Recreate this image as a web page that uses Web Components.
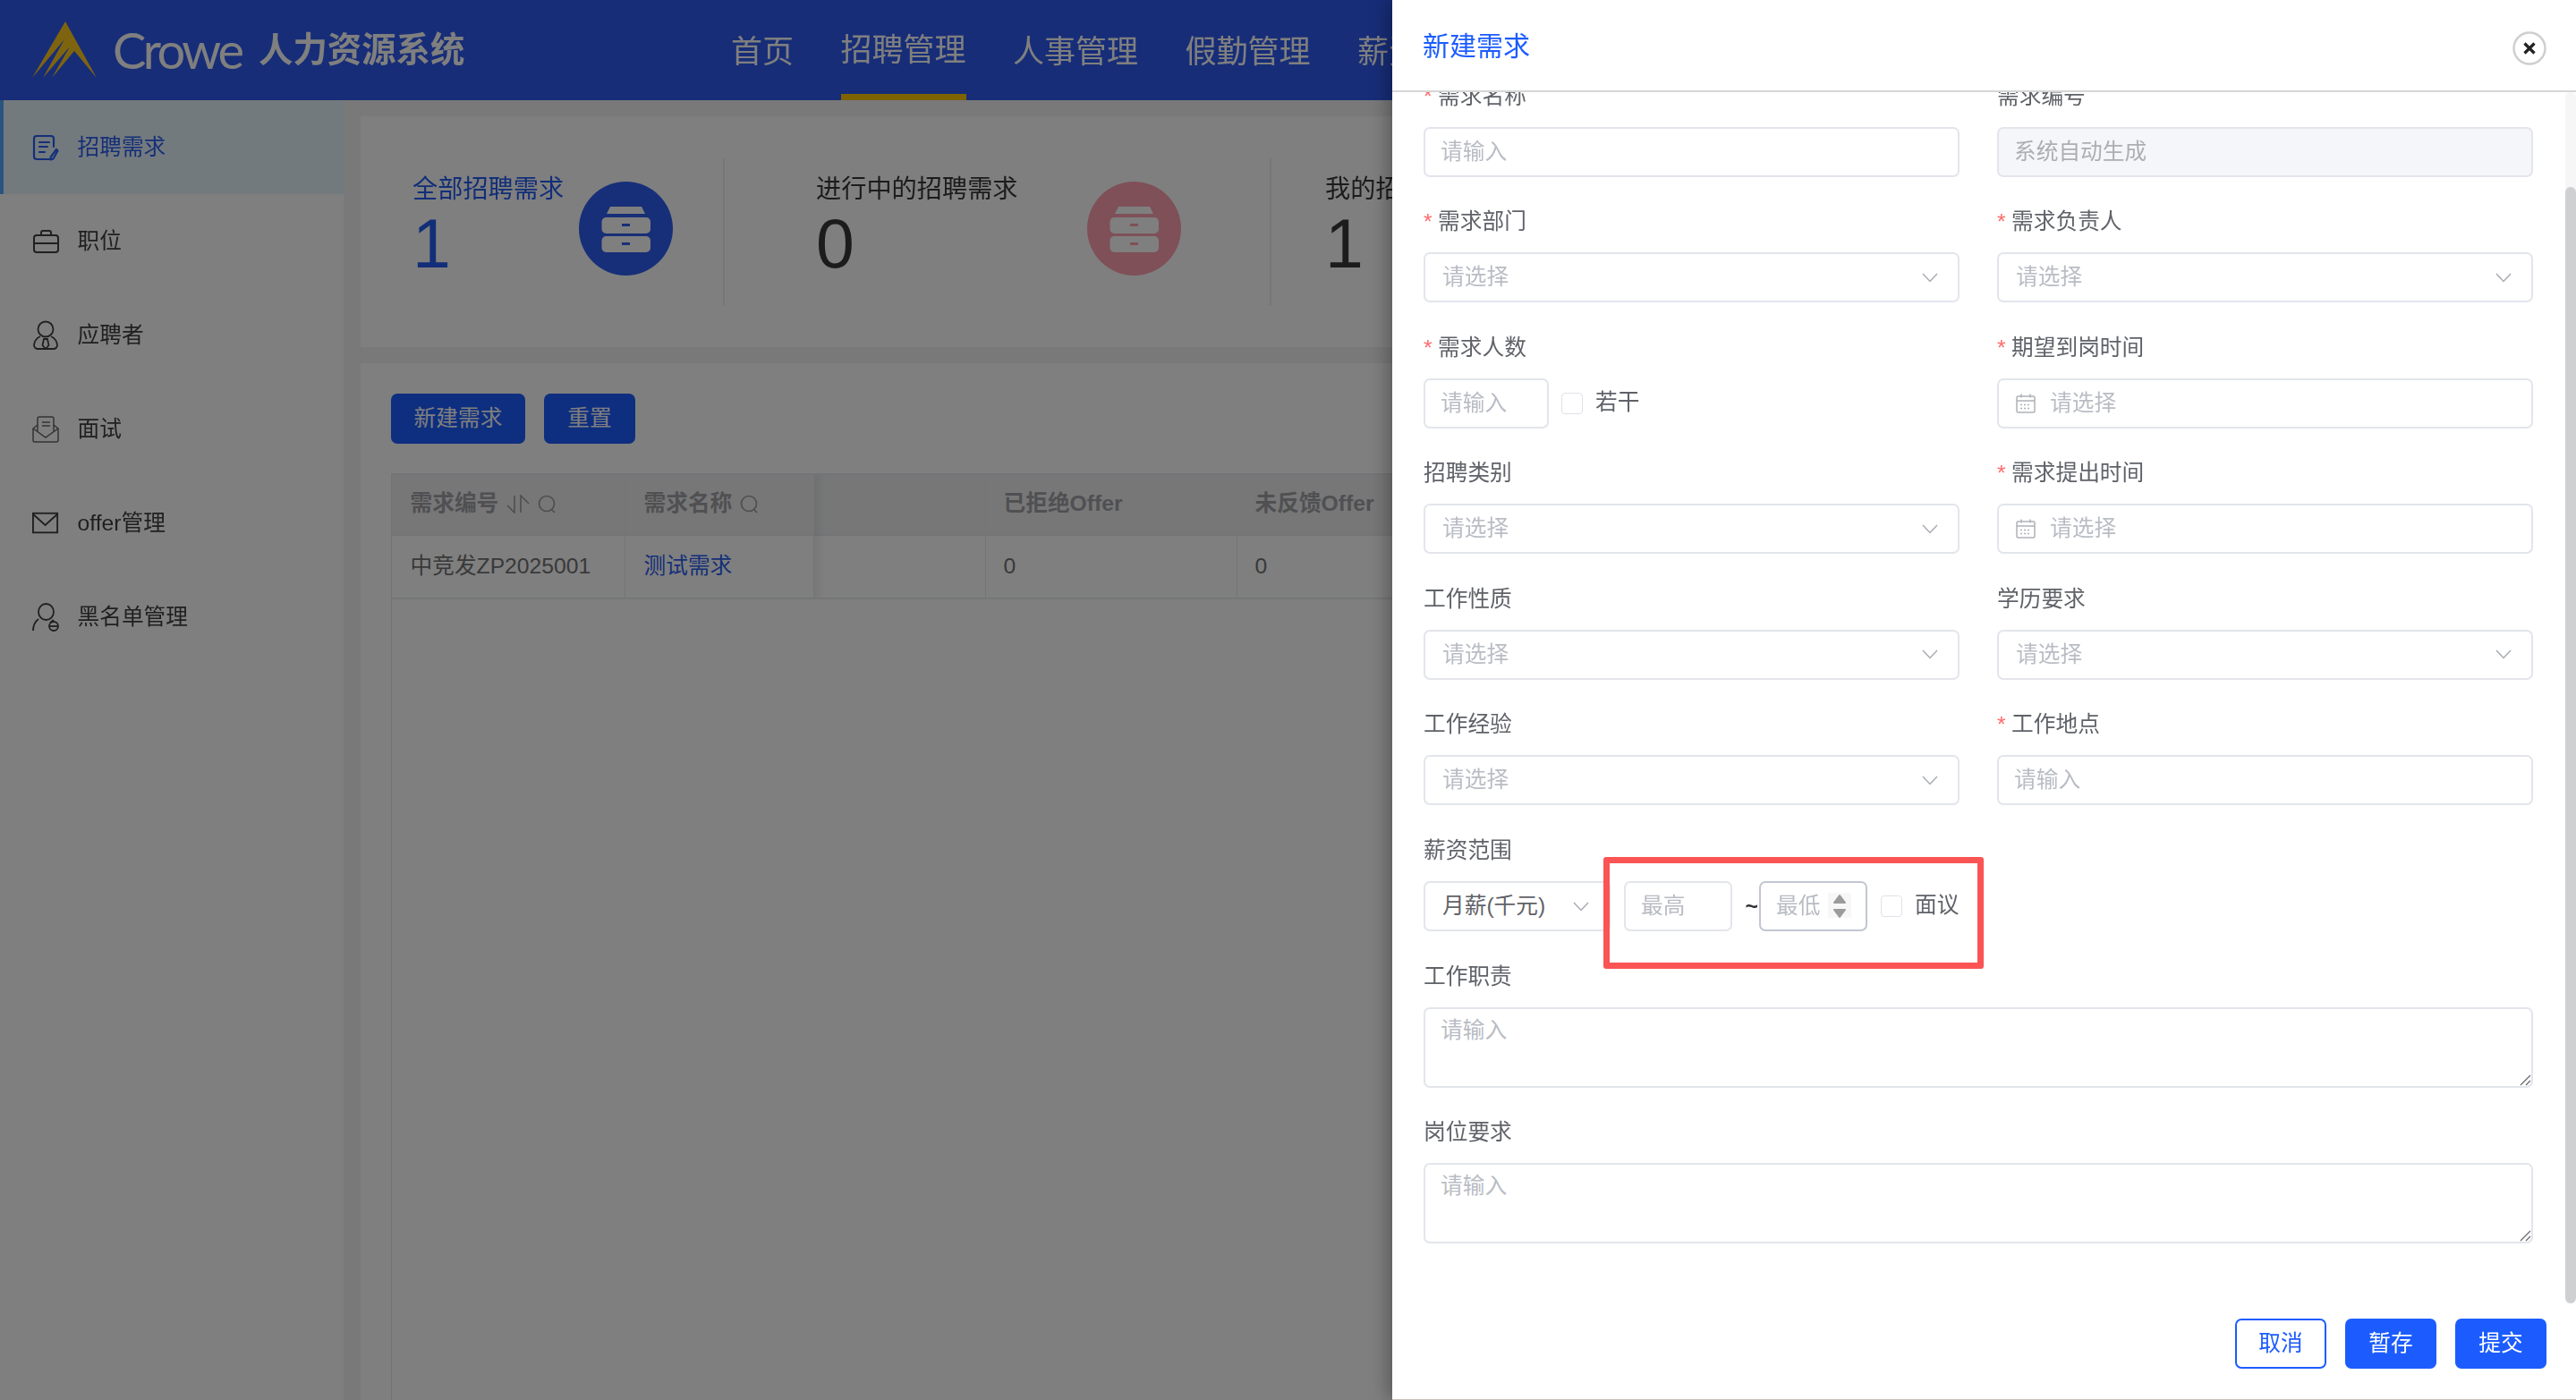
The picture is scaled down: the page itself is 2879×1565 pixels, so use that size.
<!DOCTYPE html>
<html lang="zh">
<head>
<meta charset="utf-8">
<title>Crowe 人力资源系统</title>
<style>
  html, body { margin: 0; height: 100%; overflow: hidden; }
  body { font-family: "Liberation Sans", "Noto Sans CJK SC", sans-serif; font-size: 24.7px; }
</style>
</head>
<body>
<hr-app>
  <hr-header slot="header"></hr-header>

  <side-menu slot="side">
    <side-item label="招聘需求" active>
      <svg slot="icon" viewBox="0 0 30 30" width="30" height="30" fill="none" stroke="currentColor" stroke-width="2.2" stroke-linecap="round" stroke-linejoin="round"><path d="M19 28H5a3 3 0 0 1-3-3V5a3 3 0 0 1 3-3h16a3 3 0 0 1 3 3v9"/><path d="M8 9h11M8 14h9M8 20h6"/><path d="M27 17l1.5 1.5-5 9-3 1 .2-3z"/></svg>
    </side-item>
    <side-item label="职位">
      <svg slot="icon" viewBox="0 0 30 30" width="30" height="30" fill="none" stroke="currentColor" stroke-width="2"><rect x="2" y="8" width="27" height="19" rx="3"/><path d="M10 8V5a2 2 0 0 1 2-2h7a2 2 0 0 1 2 2v3M2 17h27"/></svg>
    </side-item>
    <side-item label="应聘者">
      <svg slot="icon" viewBox="0 0 30 34" width="30" height="34" fill="none" stroke="currentColor" stroke-width="1.8"><circle cx="15" cy="10" r="8.5"/><path d="M9 18C4 20 2 25 2 28c0 2 2 4 4 4h18c2 0 4-2 4-4 0-3-2-8-7-10"/><path d="M13 21h4l1.5 7-3.5 4-3.5-4z"/></svg>
    </side-item>
    <side-item label="面试">
      <svg slot="icon" viewBox="0 0 30 32" width="30" height="32" fill="none" stroke="currentColor" stroke-width="1.5" opacity=".8"><path d="M6 11l-5 4v13a2 2 0 0 0 2 2h24a2 2 0 0 0 2-2V15l-5-4"/><path d="M1 15l14 10 14-10"/><path d="M6 18V4a2 2 0 0 1 2-2h14a2 2 0 0 1 2 2v14"/><path d="M11 8h9M11 12h9"/></svg>
    </side-item>
    <side-item label="offer管理">
      <svg slot="icon" viewBox="0 0 32 26" width="32" height="26" fill="none" stroke="currentColor" stroke-width="2"><rect x="1" y="1" width="29" height="23"/><path d="M1 2l14.500 13L30 2"/></svg>
    </side-item>
    <side-item label="黑名单管理">
      <svg slot="icon" viewBox="0 0 30 32" width="30" height="32" fill="none" stroke="currentColor" stroke-width="1.8"><ellipse cx="15.500" cy="10" rx="8.500" ry="9"/><path d="M1 31c0-6 2-10 6-13M24 19l-4 3"/><circle cx="24" cy="26" r="5"/><path d="M20 26h8"/></svg>
    </side-item>
  </side-menu>

  <main-view slot="main">
    <stat-bar>
      <stat-card label="全部招聘需求" value="1" accent style="width:407px;--pad:58px"></stat-card>
      <stat-card label="进行中的招聘需求" value="0" pink style="width:611px;--pad:102px"></stat-card>
      <stat-card label="我的招聘需求" value="1" style="width:500px;--pad:60px"></stat-card>
    </stat-bar>
    <demand-list></demand-list>
  </main-view>

  <req-drawer slot="drawer" heading="新建需求">
    <form-field label="需求名称" required><text-box placeholder="请输入"></text-box></form-field>
    <form-field label="需求编号"><text-box placeholder="系统自动生成" disabled></text-box></form-field>
    <form-field label="需求部门" required><select-box placeholder="请选择"></select-box></form-field>
    <form-field label="需求负责人" required><select-box placeholder="请选择"></select-box></form-field>
    <form-field label="需求人数" required><count-box></count-box></form-field>
    <form-field label="期望到岗时间" required><date-box placeholder="请选择"></date-box></form-field>
    <form-field label="招聘类别"><select-box placeholder="请选择"></select-box></form-field>
    <form-field label="需求提出时间" required><date-box placeholder="请选择"></date-box></form-field>
    <form-field label="工作性质"><select-box placeholder="请选择"></select-box></form-field>
    <form-field label="学历要求"><select-box placeholder="请选择"></select-box></form-field>
    <form-field label="工作经验"><select-box placeholder="请选择"></select-box></form-field>
    <form-field label="工作地点" required><text-box placeholder="请输入"></text-box></form-field>
    <form-field label="薪资范围" style="grid-column:1/-1"><salary-range></salary-range></form-field>
    <form-field label="工作职责" style="grid-column:1/-1"><area-box placeholder="请输入"></area-box></form-field>
    <form-field label="岗位要求" style="grid-column:1/-1"><area-box placeholder="请输入"></area-box></form-field>
    <app-button slot="footer" outline>取消</app-button>
    <app-button slot="footer">暂存</app-button>
    <app-button slot="footer">提交</app-button>
  </req-drawer>
</hr-app>

<script>
const PRIMARY = '#1c5cff';
const CHEVRON = `<svg viewBox="0 0 18 11" width="18" height="11" fill="none" stroke="#a9acb3" stroke-width="1.500"><path d="M1 1l8 8.500L17 1"/></svg>`;
const BOX = `box-sizing:border-box;height:56px;border:2px solid #e3e5ec;border-radius:7px;background:#fff;line-height:52px;`;

// every element here only has static markup, so one small helper is enough
function component(name, render) {
    customElements.define(name, class extends HTMLElement {
        constructor() {
            super();
            this._shadow = this.attachShadow({ mode: 'open' });
        }
        connectedCallback() {
            this._shadow.innerHTML = render(this);
        }
    });
}
const attr = (el, n) => el.getAttribute(n) || '';

component('hr-app', () => `
  <style>
    /* the reference is an upscaled capture, edges are a bit soft */
    :host { display: block; position: relative; width: 2879px; height: 1565px; overflow: hidden; filter: blur(.5px); }
    .body { display: flex; height: 1453px; }
    .mask { position: absolute; inset: 0; background: rgba(0,0,0,.5); }
  </style>
  <slot name="header"></slot>
  <div class="body"><slot name="side"></slot><slot name="main"></slot></div>
  <div class="mask"></div>
  <slot name="drawer"></slot>
`);

component('hr-header', () => `
  <style>
    :host { display: flex; height: 112px; background: #2e5af0; color: #fff; }
    .logo { display: flex; align-items: center; width: 817px; flex: none; box-sizing: border-box; padding-left: 36px; }
    .crowe { font-family: Lato, "Open Sans", sans-serif; font-weight: 400; font-size: 56px; letter-spacing: -3.500px; width: 163px; margin-left: 17px; line-height: 112px; }
    .name { font-weight: 700; font-size: 38.400px; line-height: 112px; white-space: nowrap; }
    nav { display: flex; gap: 52.500px; font-size: 35px; }
    nav span { display: flex; align-items: center; box-sizing: border-box; height: 112px; padding-bottom: 3px; white-space: nowrap; }
    nav .on { padding-bottom: 0; border-bottom: 7px solid #ffc600; }
  </style>
  <div class="logo">
    <svg width="73" height="64" viewBox="36 24 73 64"><polygon fill="#ffc820" points="73,24 108,87 83,57 58,87 78,52 48,87 72,44 36,87"/></svg>
    <span class="crowe">Crowe</span><span class="name">人力资源系统</span>
  </div>
  <nav><span>首页</span><span class="on">招聘管理</span><span>人事管理</span><span>假勤管理</span><span>薪资</span></nav>
`);

component('side-menu', () => `
  <style>:host { display: block; width: 384px; flex: none; background: #fff; }</style>
  <slot></slot>
`);

component('side-item', el => `
  <style>
    :host { display: flex; align-items: center; box-sizing: border-box; height: 105px; padding-left: 32px; border-left: 4px solid transparent; color: #404040; line-height: 32px; }
    :host([active]) { border-left-color: #54a8ff; background: #e6f4fc; color: #2b5ff0; }
    .icon { display: flex; width: 30px; margin-right: 20.500px; justify-content: center; }
  </style>
  <span class="icon"><slot name="icon"></slot></span><span>${attr(el, 'label')}</span>
`);

component('main-view', () => `
  <style>:host { display: flex; flex-direction: column; flex: 1; gap: 18px; min-width: 0; padding: 18px 0 0 19px; background: #f2f2f2; }</style>
  <slot></slot>
`);

component('stat-bar', () => `
  <style>:host { display: flex; align-items: center; height: 258px; flex: none; background: #fff; }</style>
  <slot></slot>
`);

component('stat-card', el => {
    const tint = el.hasAttribute('pink') ? '#ffa0b0' : '#2e5ef0';
    return `
  <style>
    :host { display: flex; justify-content: space-between; box-sizing: border-box; height: 164px; padding: 0 calc(var(--pad) - 3px) 0 var(--pad); border-right: 2px solid #ececec; color: #383838; }
    :host([accent]) { color: #245cf0; padding-right: 56px; }
    :host(:last-child) { border-right: 0; }
    .label { font-size: 28.200px; line-height: 40px; margin-top: 14px; white-space: nowrap; }
    .value { font-size: 77px; line-height: 72px; margin-top: 5px; }
    svg { margin-top: 26px; flex: none; }
  </style>
  <div><div class="label">${attr(el, 'label')}</div><div class="value">${attr(el, 'value')}</div></div>
  <svg width="105" height="105" viewBox="0 0 105 105">
    <circle cx="52.500" cy="52.500" r="52.500" fill="${tint}"/>
    <path fill="#fff" d="M35 28h35l4 8H31z"/>
    <rect x="25.500" y="40" width="54.500" height="18" rx="5" fill="#fff"/>
    <rect x="25.500" y="61" width="54.500" height="18" rx="5" fill="#fff"/>
    <rect x="48" y="47" width="9" height="3" fill="${tint}"/>
    <rect x="48" y="68" width="9" height="3" fill="${tint}"/>
  </svg>`;
});

const SEARCH = `<svg width="21" height="21" viewBox="0 0 21 21" fill="none" stroke="#9c9c9c" stroke-width="1.700"><circle cx="10" cy="10" r="8.500"/><path d="M15 16l4 4"/></svg>`;
const SORT = `<svg width="26" height="21" viewBox="0 0 26 21" fill="none" stroke="#9c9c9c" stroke-width="1.600"><path d="M9 1v19L1 12M16 20V1l9 9"/></svg>`;

component('demand-list', () => `
  <style>
    :host { display: block; flex: 1; min-height: 0; box-sizing: border-box; padding: 34px 0 0 34px; background: #fff; }
    .tools { display: flex; gap: 21px; height: 56px; margin-bottom: 33px; }
    .table { position: relative; height: 100%; border-left: 1px solid #e4e6ee; border-top: 2px solid #e6e8ee; }
    .row { display: grid; grid-template-columns: 261px 211px 192px 281px 400px; border-bottom: 2px solid #e8eaef; }
    .head { height: 66px; background: #eeeff1; color: #a0a0a4; font-weight: 700; }
    .body { height: 69px; color: #737373; }
    .row > div { display: flex; align-items: center; gap: 9px; box-sizing: border-box; padding-left: 20.500px; padding-bottom: 2px; border-right: 1px solid #e8eaef; line-height: 32px; white-space: nowrap; }
    .row .wide { padding-left: 19.500px; }
    a { color: #2b5ff0; }
    .fix { position: absolute; left: 472px; top: 0; width: 12px; height: 137px; background: linear-gradient(90deg, rgba(0,0,0,.06), rgba(0,0,0,0)); }
  </style>
  <div class="tools"><app-button style="width:150px">新建需求</app-button><app-button>重置</app-button></div>
  <div class="table">
    <div class="row head">
      <div>需求编号 ${SORT}${SEARCH}</div><div>需求名称 ${SEARCH}</div><div></div><div class="wide">已拒绝Offer</div><div class="wide">未反馈Offer</div>
    </div>
    <div class="row body">
      <div>中竞发ZP2025001</div><div><a>测试需求</a></div><div></div><div class="wide">0</div><div class="wide">0</div>
    </div>
    <div class="fix"></div>
  </div>
`);

component('req-drawer', el => `
  <style>
    :host { position: absolute; top: 0; right: 0; bottom: 0; width: 1323px; box-sizing: border-box; display: flex; flex-direction: column; background: #fff; border-bottom: 1px solid #c9c1b8; box-shadow: -6px 0 18px rgba(0,0,0,.28); }
    header { display: flex; align-items: center; justify-content: space-between; flex: none; box-sizing: border-box; height: 103px; padding: 0 33px 0 34px; border-bottom: 2px solid #d6d6d6; color: ${PRIMARY}; font-size: 30px; }
    header span { margin-bottom: 3px; }
    header svg { margin-top: 6px; }
    .scroll { position: relative; flex: 1; min-height: 0; overflow: hidden; }
    .form { display: grid; grid-template-columns: 599px 599px; column-gap: 42px; row-gap: 34.600px; margin: -11.500px 0 0 35px; }
    .track { position: absolute; top: 0; right: 0; bottom: 0; width: 12px; border-radius: 6px; background: #f6f6f7; }
    .thumb { position: absolute; top: 106px; bottom: 0; left: 0; right: 0; border-radius: 6px; background: #cfd0d2; }
    footer { display: flex; justify-content: flex-end; gap: 21px; flex: none; height: 107px; box-sizing: border-box; padding: 17px 33px 0 0; }
  </style>
  <header><span>${attr(el, 'heading')}</span>
    <svg width="38" height="38" viewBox="0 0 38 38" fill="none"><circle cx="19" cy="19" r="17.500" stroke="#cfcfcf" stroke-width="2.500"/><path d="M13.500 13.500l11 11M24.500 13.500l-11 11" stroke="#222" stroke-width="3.200"/></svg>
  </header>
  <div class="scroll">
    <div class="form"><slot></slot></div>
    <div class="track"><div class="thumb"></div></div>
  </div>
  <footer><slot name="footer"></slot></footer>
`);

component('form-field', el => `
  <style>
    :host { display: block; }
    .label { height: 32px; margin-bottom: 18px; line-height: 32px; color: #5f6268; white-space: nowrap; }
    .star { color: #ff6b6b; margin-right: 6.500px; }
  </style>
  <div class="label">${el.hasAttribute('required') ? '<span class="star">*</span>' : ''}${attr(el, 'label')}</div>
  <slot></slot>
`);

component('text-box', el => `
  <style>
    :host { display: block; ${BOX} padding-left: 17px; color: #b9bcc4; white-space: nowrap; overflow: hidden; }
    :host([disabled]) { background: #f5f6fa; color: #adadb2; }
    :host([hover]) { border-color: #c2c6d2; }
  </style>
  ${attr(el, 'placeholder')}
`);

component('select-box', el => `
  <style>
    :host { display: flex; align-items: center; justify-content: space-between; ${BOX} padding: 0 22px 0 19px; color: #b9bcc4; }
    :host([filled]) { color: #5f6268; }
    svg { flex: none; }
  </style>
  <span>${attr(el, 'placeholder')}</span>${CHEVRON}
`);

component('date-box', el => `
  <style>
    :host { display: flex; align-items: center; gap: 16px; ${BOX} padding-left: 19px; color: #b9bcc4; }
    svg { flex: none; }
  </style>
  <svg width="22" height="22" viewBox="0 0 22 22" fill="none" stroke="#afb1b7" stroke-width="1.500"><rect x="1" y="3" width="20" height="18" rx="1.500"/><path d="M1 8h20M6 .500v4M16 .500v4"/><path stroke-dasharray="2 2" d="M5 12.500h12M5 16.500h12"/></svg>
  <span>${attr(el, 'placeholder')}</span>
`);

component('area-box', el => `
  <style>
    :host { display: block; position: relative; ${BOX} height: 90px; padding-left: 17px; line-height: 48px; color: #b9bcc4; }
    svg { position: absolute; right: 0; bottom: 0; }
  </style>
  ${attr(el, 'placeholder')}
  <svg width="13" height="13" viewBox="0 0 13 13" fill="none" stroke="#6a6a6a" stroke-width="1.300"><path d="M1 12L12 1M7 12l5-5"/></svg>
`);

component('check-box', el => `
  <style>
    :host { display: flex; align-items: center; gap: 14px; height: 32px; line-height: 32px; color: #5f6268; white-space: nowrap; }
    i { display: block; box-sizing: border-box; width: 24px; height: 24px; border: 1.500px solid #e0e2e8; border-radius: 4px; background: #fff; }
    span { margin-bottom: 2px; }
  </style>
  <i></i><span>${attr(el, 'label')}</span>
`);

component('count-box', () => `
  <style>:host { display: flex; align-items: center; gap: 14px; }</style>
  <text-box placeholder="请输入" style="width:140px"></text-box>
  <check-box label="若干"></check-box>
`);

component('salary-range', () => `
  <style>
    :host { display: flex; align-items: center; position: relative; }
    .tilde { box-sizing: border-box; width: 30px; padding-right: 1px; line-height: 32px; text-align: right; color: #333; font-weight: 700; }
    .spin { position: absolute; left: 452px; top: 13px; width: 26px; height: 28px; background: #f7f7f7; }
    .red { position: absolute; left: 201px; top: -27px; width: 425px; height: 125px; box-sizing: border-box; border: 7px solid #fb5454; border-radius: 3px; pointer-events: none; }
  </style>
  <select-box filled placeholder="月薪(千元)" style="width:209px;margin-right:15px"></select-box>
  <text-box placeholder="最高" style="width:121px"></text-box>
  <span class="tilde">~</span>
  <text-box placeholder="最低" hover style="width:121px;margin-right:15px"></text-box>
  <check-box label="面议"></check-box>
  <svg class="spin" viewBox="0 0 26 28"><path fill="#9b9b9b" stroke="#9b9b9b" stroke-linejoin="round" stroke-width="2" d="M13 3l6 8H7zM13 27l-6-8h12z"/></svg>
  <div class="red"></div>
`);

component('app-button', () => `
  <style>
    :host { display: flex; align-items: center; justify-content: center; box-sizing: border-box; width: 102px; height: 56px; border-radius: 7px; background: ${PRIMARY}; color: #fff; line-height: 32px; white-space: nowrap; }
    :host([outline]) { background: #fff; border: 2px solid ${PRIMARY}; color: ${PRIMARY}; }
  </style>
  <slot></slot>
`);
</script>
</body>
</html>
